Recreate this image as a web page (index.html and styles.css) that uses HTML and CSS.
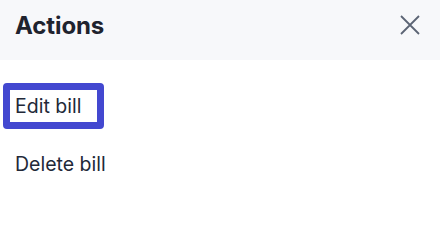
FILE: index.html
```html
<!DOCTYPE html>
<html>
<head>
<meta charset="utf-8">
<link rel="stylesheet" href="styles.css">
</head>
<body>
<div class="panel">
  <div class="header">
    <h2 class="title">Actions</h2>
    <button class="close" aria-label="Close">
      <svg width="20" height="20" viewBox="0 0 20 20" fill="none" stroke="#5b6474" stroke-width="1.8" stroke-linecap="butt">
        <path d="M1 1 L19 19 M19 1 L1 19"/>
      </svg>
    </button>
  </div>
  <ul class="menu">
    <li><a class="item focused" href="#">Edit bill</a></li>
    <li><a class="item" href="#">Delete bill</a></li>
  </ul>
</div>
</body>
</html>
```

FILE: styles.css
```css
html, body {
  margin: 0;
  padding: 0;
  background: #ffffff;
}
body {
  font-family: Inter, "Noto Sans", sans-serif;
  color: #1d2230;
}
.panel {
  width: 440px;
}
.header {
  height: 60px;
  background: #f7f8fa;
  display: flex;
  align-items: center;
  justify-content: space-between;
  padding: 0 20px 0 15px;
  box-sizing: border-box;
}
.title {
  margin: 0;
  font-size: 24px;
  font-weight: 700;
  color: #1f232e;
  letter-spacing: -0.1px;
  position: relative;
  top: -5px;
}
.close {
  border: 0;
  background: none;
  padding: 0;
  width: 20px;
  height: 20px;
  display: flex;
  position: relative;
  top: -5px;
}
.menu {
  list-style: none;
  margin: 0;
  padding: 30px 0 0 10px;
  display: flex;
  flex-direction: column;
  gap: 26px;
  align-items: flex-start;
}
.item {
  display: block;
  font-size: 19.5px;
  line-height: 22px;
  padding: 5px 5px;
  color: #222838;
  text-decoration: none;
}
.focused {
  border: 7px solid #4348d0;
  border-radius: 4px;
  margin: -7px;
  padding-right: 16px;
  outline: none;
}
```
